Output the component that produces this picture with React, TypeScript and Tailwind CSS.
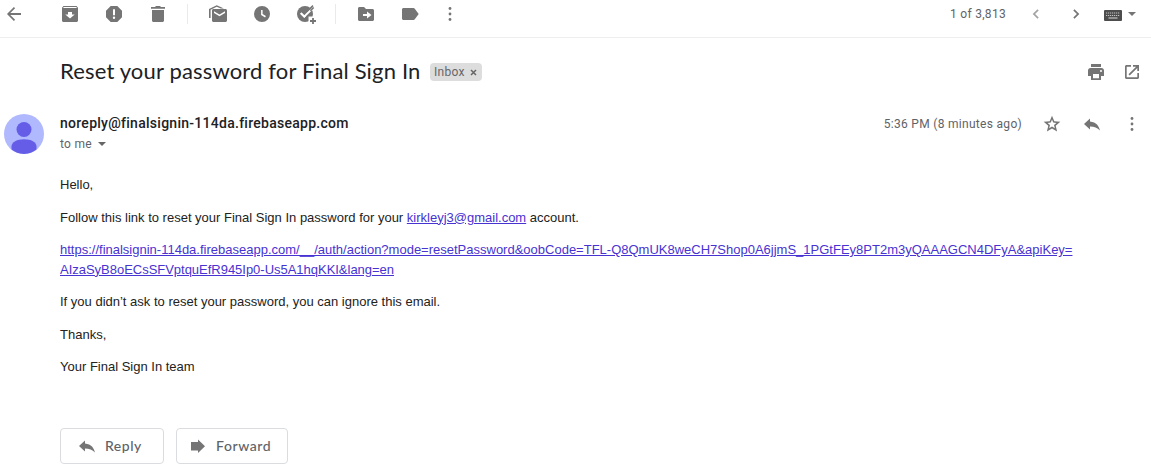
import type { ReactNode } from "react";

function Icon({ d, children, className = "" }: { d?: string; children?: ReactNode; className?: string }) {
  return (
    <svg viewBox="0 0 20 20" className={`size-5 shrink-0 ${className}`} fill="currentColor" fillRule="evenodd" aria-hidden="true">
      {d && <path d={d} />}
      {children}
    </svg>
  );
}

const replyPath = "M8 7.500V4.400L2 10l6 5.600v-3.200c4.300 0 7.400 1.200 10 4.200-.9-4.400-3.700-8.500-10-9.100z";

function MoreIcon() {
  return (
    <Icon>
      <circle cx="10" cy="4.500" r="1.400" />
      <circle cx="10" cy="10" r="1.400" />
      <circle cx="10" cy="15.500" r="1.400" />
    </Icon>
  );
}

function Toolbar() {
  return (
    <header className="flex h-[38px] shrink-0 items-start border-b border-[#eceeef] pt-1 text-[#757575]">
      <button aria-label="Back" className="ml-1">
        <Icon d="M17 9.100H6.300l4.800-4.800L9.900 3 3 10l6.900 7 1.200-1.300-4.800-4.800H17z" />
      </button>
      <div className="ml-9 flex gap-6">
        <Icon d="M3.400 2h13.200L18 3.800v12.700c0 .8-.7 1.500-1.500 1.500h-13c-.8 0-1.500-.7-1.500-1.500V3.800zM3.700 3.100l-.6.800h13.800l-.6-.8zM8 8v2.600H5.300L10 14.500l4.700-3.900H12V8z" />
        <Icon d="M6.700 2h6.600L18 6.700v6.600L13.300 18H6.700L2 13.300V6.700zM9 5.200v6h2v-6zm1 7.400a1.200 1.200 0 1 0 0 2.400 1.200 1.200 0 0 0 0-2.400z" />
        <Icon d="M3 3h4l1-1h4l1 1h4v1.700H3zM4 6h12v10.500c0 .8-.7 1.500-1.500 1.500h-9c-.8 0-1.500-.7-1.500-1.500z" />
      </div>
      <div className="ml-[19px] h-5 w-px bg-[#e8eaed]" />
      <div className="ml-5 flex gap-6">
        <Icon>
          <path d="M1 14V5L8.700 1.200 16 4.400H12.800L8.700 2.700 2.600 5.800V14z" />
          <path d="M5.500 5h12c.8 0 1.500.7 1.500 1.500v10c0 .8-.7 1.500-1.500 1.500h-12c-.8 0-1.500-.7-1.500-1.500v-10C4 5.700 4.700 5 5.500 5zM6 7.300v1.600l5.500 3.300L17 8.900V7.300l-5.500 3.300z" />
        </Icon>
        <Icon d="M10 2a8 8 0 1 0 0 16 8 8 0 0 0 0-16zm-.9 4h1.500v4.100l3.300 2-.8 1.300-4-2.500z" />
        <svg viewBox="0 0 20 20" className="size-5 overflow-visible" aria-hidden="true">
          <circle cx="9" cy="10" r="8" fill="currentColor" />
          <path d="M4.800 9.100l3.500 3.500L19 1.900" fill="none" stroke="white" strokeWidth="2" />
          <path d="M11.500 6.700l4.700-4.700h3v3l-1 1z" fill="white" />
          <path d="M11 7.600l6-6M9.700 11.500l8-8" fill="none" stroke="currentColor" strokeWidth="1.500" />
          <path d="M4.800 9.100l3.500 3.500 6-6" fill="none" stroke="white" strokeWidth="1.700" />
          <path d="M12.500 12.500h8v8h-8z" fill="white" />
          <path d="M14 17h6M17 14v6" stroke="currentColor" strokeWidth="1.800" />
        </svg>
      </div>
      <div className="ml-[19px] h-5 w-px bg-[#e8eaed]" />
      <div className="ml-5 flex gap-6">
        <Icon d="M3.500 3H8l2 2h6.500c.8 0 1.500.7 1.500 1.500v9c0 .8-.7 1.500-1.500 1.500h-13c-.8 0-1.500-.7-1.500-1.500v-11C2 3.700 2.700 3 3.500 3zM11 7.500V10H7v2h4v2.500l4.500-3.500z" />
        <Icon d="M3.500 4h10c.5 0 1 .3 1.300.7l3.900 5.300-3.900 5.300c-.3.400-.8.700-1.300.7h-10c-.8 0-1.500-.7-1.500-1.500v-9C2 4.700 2.700 4 3.500 4z" />
      </div>
      <div className="ml-5"><MoreIcon /></div>
      <div className="mr-[15px] ml-auto flex h-5 items-center">
        <span className="mr-5 font-[Roboto,sans-serif] text-[12px] tracking-[0.3px] whitespace-nowrap text-[#5f6368]">1 of 3,813</span>
        <Icon className="text-[#a3a3a3]" d="M12.700 6.400L11.500 5.200 6.700 10l4.800 4.800 1.200-1.200L9.100 10z" />
        <Icon className="ml-5" d="M7.300 6.400l1.200-1.200 4.800 4.800-4.800 4.800-1.200-1.200 3.600-3.600z" />
        <svg viewBox="0 0 18 11" className="mt-[3px] ml-[18px] h-[11px] w-[18px]" aria-hidden="true">
          <rect width="18" height="11" rx="1" fill="#4d4d4d" />
          <path d="M2 3h14M2 5.500h14" stroke="#c4c4c4" strokeWidth="1.200" strokeDasharray="1.200 .8" />
          <path d="M4.500 8h9" stroke="#c4c4c4" strokeWidth="1.200" />
        </svg>
        <svg viewBox="0 0 8 4" className="ml-[6px] h-1 w-2" aria-hidden="true"><path d="M0 0h8L4 4z" fill="currentColor" /></svg>
      </div>
    </header>
  );
}

function Subject() {
  return (
    <div className="flex h-5 items-center pr-[9px] pl-[60px]">
      <h1 className="w-[360px] pb-[2px] font-[Lato,sans-serif] text-[22px] leading-7 tracking-[0.16px] whitespace-nowrap text-[#202124]">Reset your password for Final Sign In</h1>
      <span className="ml-[10px] flex h-[18px] w-[52px] items-center rounded-[4px] bg-[#ddd] pl-[4px] font-[Roboto,sans-serif] text-[12px] tracking-[0.3px] text-[#666]">
        Inbox
        <svg viewBox="0 0 7 7" className="mt-px ml-[5px] size-[7px]" aria-hidden="true"><path d="M1 1l5 5M6 1L1 6" stroke="#666" strokeWidth="1.500" /></svg>
      </span>
      <div className="ml-auto flex gap-4 text-[#757575]">
        <Icon d="M5 2h10v3H5zM4.500 6h11C16.900 6 18 7.100 18 8.500V14h-3v4H5v-4H2V8.500C2 7.100 3.100 6 4.500 6zM7 12v4.300h6V12zm8-4a1 1 0 1 0 0 2 1 1 0 0 0 0-2z" />
        <Icon d="M4.500 3H9v1.700H4.700v10.600h10.600V11H17v4.500c0 .8-.7 1.500-1.500 1.500h-11c-.8 0-1.500-.7-1.500-1.500v-11C3 3.700 3.700 3 4.500 3zM11 3h6v6h-1.700V5.900l-7.600 7.600-1.200-1.200 7.600-7.600H11z" />
      </div>
    </div>
  );
}

function Sender() {
  return (
    <div className="mt-8 flex h-10 pr-[9px] pl-1">
      <svg viewBox="0 0 40 40" className="size-10" aria-hidden="true">
        <circle cx="20" cy="20" r="20" fill="#b0b8fe" />
        <circle cx="20" cy="15.500" r="7.500" fill="#655de8" />
        <path d="M7.500 35.600v-3.200c0-4.400 5.500-7.200 12.500-7.200s12.500 2.800 12.500 7.200v3.200C29.100 38.400 24.700 40 20 40s-9.100-1.600-12.500-4.400z" fill="#655de8" />
      </svg>
      <div className="ml-4 font-[Roboto,sans-serif]">
        <div className="pb-[2px] text-[14px] leading-[18px] font-medium tracking-[0.27px] text-[#202124]">noreply@finalsignin-114da.firebaseapp.com</div>
        <div className="flex items-center text-[12px] leading-5 tracking-[0.3px] text-[#5f6368]">
          to me
          <svg viewBox="0 0 8 4" className="ml-[6px] h-1 w-2" aria-hidden="true"><path d="M0 0h8L4 4z" fill="#666" /></svg>
        </div>
      </div>
      <div className="ml-auto flex h-5 items-center text-[#757575]">
        <span className="mr-5 font-[Roboto,sans-serif] text-[12px] tracking-[0.3px] text-[#5f6368]">5:36 PM (8 minutes ago)</span>
        <Icon d="M10 1.700l2.300 5.600 6 .5-4.600 3.900 1.400 5.900L10 14.500l-5.100 3.100 1.400-5.900-4.600-3.900 6-.5zM10 5.500L8.800 8.600l-3.200.3L8 11l-.8 3.200 2.800-1.700 2.800 1.700L12 11l2.400-2.100-3.200-.3z" />
        <Icon className="ml-5" d={replyPath} />
        <span className="ml-5"><MoreIcon /></span>
      </div>
    </div>
  );
}

function Message() {
  return (
    <article className="mt-[21px] flex flex-col gap-[13px] pl-[60px] font-['Liberation_Sans',Arial,sans-serif] text-[13px] leading-[19.5px] whitespace-nowrap text-[#222]">
      <p>Hello,</p>
      <p>Follow this link to reset your Final Sign In password for your <a className="text-[#4733d1] underline">kirkleyj3@gmail.com</a> account.</p>
      <p>
        <a className="text-[#4733d1] underline">
          https://finalsignin-114da.firebaseapp.com/__/auth/action?mode=resetPassword&amp;oobCode=TFL-Q8QmUK8weCH7Shop0A6jjmS_1PGtFEy8PT2m3yQAAAGCN4DFyA&amp;apiKey=
          <br />
          <span className="tracking-[-0.02px]">AIzaSyB8oECsSFVptquEfR945Ip0-Us5A1hqKKI&amp;lang=en</span>
        </a>
      </p>
      <p>If you didn’t ask to reset your password, you can ignore this email.</p>
      <p>Thanks,</p>
      <p>Your Final Sign In team</p>
    </article>
  );
}

function Actions() {
  const button = "flex h-9 items-center rounded-[4px] border border-[#dadce0] font-[Lato,sans-serif] text-[14px] font-medium text-[#5f6368]";
  return (
    <div className="mt-[51px] flex gap-3 pl-[60px]">
      <button className={`${button} w-[104px] pl-4`}>
        <Icon className="text-[#757575]" d={replyPath} />
        <span className="ml-2 pb-px tracking-[0.5px]">Reply</span>
      </button>
      <button className={`${button} w-[112px] pl-[11px]`}>
        <Icon className="text-[#757575]" d="M3 6h7V3.500l7 6.800-7 6.700v-2.500H3z" />
        <span className="ml-2 pb-px tracking-[0.6px]">Forward</span>
      </button>
    </div>
  );
}

export default function App() {
  return (
    <main className="flex h-[465px] w-[1151px] flex-col overflow-hidden bg-white">
      <Toolbar />
      <div className="pt-6">
        <Subject />
        <Sender />
        <Message />
        <Actions />
      </div>
    </main>
  );
}
